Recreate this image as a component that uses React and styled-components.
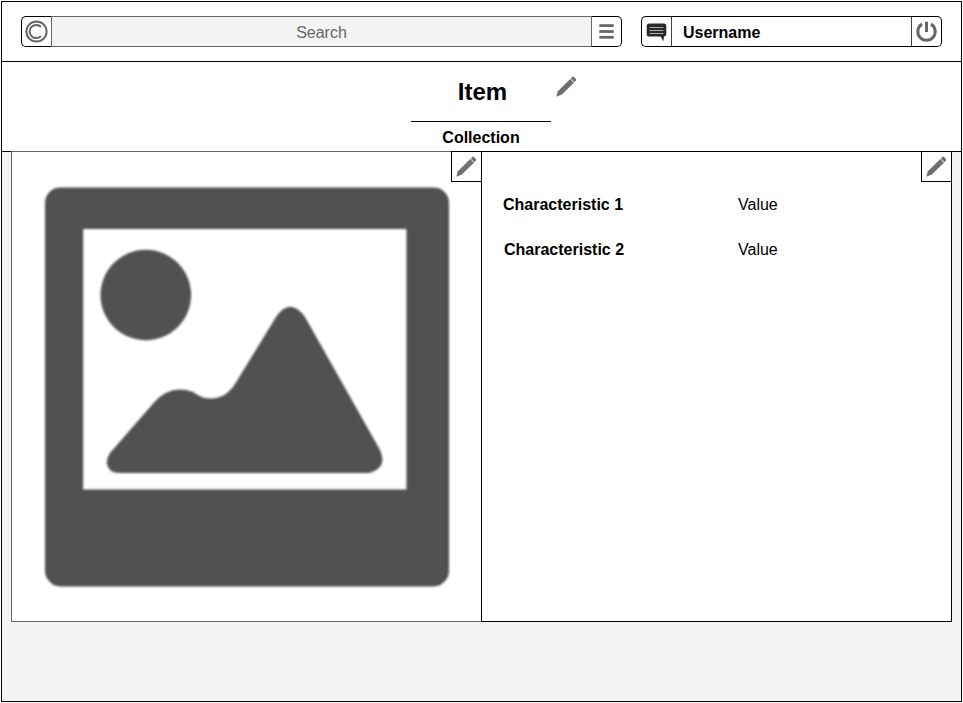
import React from "react";
import styled, { createGlobalStyle } from "styled-components";

const GlobalStyle = createGlobalStyle`
  * { box-sizing: border-box; }
  body {
    margin: 0;
    background: #fff;
    color: #000;
    font-family: "Liberation Sans", Arial, Helvetica, sans-serif;
    font-size: 16px;
    overflow: hidden;
  }
  svg { display: block; }
`;

const Frame = styled.div`
  width: 961px;
  height: 701px;
  margin: 1px;
  border: 1px solid #000;
  background: #f4f4f4;
  display: flex;
  flex-direction: column;
`;

const Header = styled.header`
  display: flex;
  gap: 19px;
  height: 60px;
  padding: 14px 19px 0;
  background: #fff;
  border-bottom: 1px solid #000;
`;

const Bar = styled.div`
  display: flex;
  width: ${(p) => p.$width}px;
  height: 31px;
`;

const IconButton = styled.button`
  width: 30px;
  height: 31px;
  padding: 0;
  background: #fff;
  border: 1px solid #000;
  border-width: ${(p) => (p.$side === "left" ? "1px 0 1px 1px" : "1px 1px 1px 0")};
  border-radius: ${(p) => (p.$side === "left" ? "5px 0 0 5px" : "0 5px 5px 0")};
  display: flex;
  align-items: center;
  justify-content: ${(p) => (p.$side === "left" ? "flex-start" : "flex-end")};
`;

const SearchField = styled.div`
  flex: 1;
  border: 1px solid #666;
  background: #f4f4f4;
  color: #666;
  text-align: center;
  line-height: 31px;
`;

const UserField = styled.div`
  flex: 1;
  border: 1px solid #000;
  border-left-color: #444;
  border-right-color: #444;
  padding-left: 11px;
  font-weight: bold;
  line-height: 31px;
`;

const TitleSection = styled.section`
  display: grid;
  grid-template-columns: 409px 140px 1fr;
  grid-template-rows: 59px 1fr;
  height: 90px;
  background: #fff;
  border-bottom: 1px solid #000;
`;

const Title = styled.h1`
  grid-column: 2;
  margin: 0;
  font-size: 24px;
  line-height: 59px;
  text-align: center;
  padding-left: 3px;
`;

const TitleEdit = styled.div`
  grid-column: 3;
  padding: 10px 0 0 1px;
`;

const Collection = styled.h2`
  grid-column: 2;
  grid-row: 2;
  margin: 0;
  border-top: 1px solid #000;
  font-size: 16px;
  line-height: 31px;
  text-align: center;
`;

const Content = styled.main`
  display: flex;
  width: 941px;
  height: 471px;
  margin: -1px 0 0 9px;
`;

const Panel = styled.section`
  position: relative;
  background: #fff;
`;

const PicturePanel = styled(Panel)`
  width: 470px;
  border: 1px solid #666;
  border-right: 0;
  padding: 29px 0 0 27px;
`;

const DetailsPanel = styled(Panel)`
  width: 471px;
  border: 1px solid #000;
  padding: 30px 0 0 21px;
`;

const EditButton = styled.button`
  position: absolute;
  top: -1px;
  right: -1px;
  width: 31px;
  height: 31px;
  padding: 0;
  border: 1px solid #000;
  background: #fff;
`;

const Characteristics = styled.dl`
  margin: 0;
  display: grid;
  grid-template-columns: 235px 1fr;
  grid-auto-rows: 45px;
  line-height: 45px;
`;

const Name = styled.dt`
  font-weight: bold;
  padding-left: ${(p) => p.$indent || 0}px;
`;

const Value = styled.dd`
  margin: 0;
`;

function Pencil() {
  return (
    <svg width="29" height="29" viewBox="0 0 29 29" fill="#707070">
      <path d="M4.3 24.7 5.8 19.2 18.2 6.9 22 10.7 9.9 22.6Z" />
      <path d="M18.7 6.4 20.3 4.9Q21.2 4.2 22 4.9L23.9 6.9Q24.6 7.7 23.9 8.5L22.5 10.2Z" />
    </svg>
  );
}

function CopyrightIcon() {
  return (
    <svg width="29" height="29" viewBox="0 0 29 29" fill="none" stroke="#666">
      <circle cx="14.5" cy="14.5" r="10.1" strokeWidth="2" />
      <path d="M19 9.9A6.6 6.6 0 1 0 19 19.1" strokeWidth="2" />
    </svg>
  );
}

function MenuIcon() {
  return (
    <svg width="29" height="29" viewBox="0 0 29 29" fill="#666">
      <rect x="7.3" y="7.2" width="14.4" height="2.8" />
      <rect x="7.3" y="13.1" width="14.4" height="2.8" />
      <rect x="7.3" y="18.9" width="14.4" height="2.8" />
    </svg>
  );
}

function MessageIcon() {
  return (
    <svg width="29" height="29" viewBox="0 0 29 29">
      <path
        d="M7.2 6.5H21.8Q24.3 6.5 24.3 9V17Q24.3 19.6 22 19.6L21.4 24.2 18.6 19.6H7.2Q4.7 19.6 4.7 17V9Q4.7 6.5 7.2 6.5Z"
        fill="#292929"
      />
      <path d="M7.5 10.5H21.5M7.5 13.5H21.5M7.5 16.5H21.5" stroke="#aaa" strokeWidth="1.2" />
    </svg>
  );
}

function PowerIcon() {
  return (
    <svg width="29" height="29" viewBox="0 0 29 29" fill="none" stroke="#666" strokeWidth="3">
      <path d="M10 7.1A8.7 8.7 0 1 0 19 7.1" />
      <path d="M14.5 4.7V15" />
    </svg>
  );
}

function PicturePlaceholder() {
  return (
    <svg width="416" height="416" viewBox="39 181 416 416" fill="#515151">
      <defs>
        <filter id="soft" x="-5%" y="-5%" width="110%" height="110%">
          <feGaussianBlur stdDeviation="1.1" />
        </filter>
      </defs>
      <g filter="url(#soft)">
        <path
          fillRule="evenodd"
          d="M60 187.6H434Q440 187.6 444.5 192Q449 196.500 449 203V571Q449 577 444.5 581.5Q440 586.4 434 586.4H60Q54 586.4 49.5 581.5Q45 577 45 571V203Q45 196.500 49.5 192Q54 187.6 60 187.6ZM83.2 229V489.5H406.4V229Z"
        />
        <circle cx="145.8" cy="295" r="45.3" />
        <path d="M120 473Q108 473 106.7 463Q106.7 458 110 453L154 402.5Q170 384.500 192 391.5C198 395 202 398.5 210 398.5C222 398.5 229 393 235 384L276 317Q290 296.5 305 317L380 450Q388 468 369 473Z" />
      </g>
    </svg>
  );
}

const characteristics = [
  { name: "Characteristic 1", value: "Value", indent: 0 },
  { name: "Characteristic 2", value: "Value", indent: 1 },
];

export default function App() {
  return (
    <>
      <GlobalStyle />
      <Frame>
        <Header>
          <Bar $width={601}>
            <IconButton $side="left" aria-label="Home"><CopyrightIcon /></IconButton>
            <SearchField>Search</SearchField>
            <IconButton $side="right" aria-label="Menu"><MenuIcon /></IconButton>
          </Bar>
          <Bar $width={301}>
            <IconButton $side="left" aria-label="Messages"><MessageIcon /></IconButton>
            <UserField>Username</UserField>
            <IconButton $side="right" aria-label="Log out"><PowerIcon /></IconButton>
          </Bar>
        </Header>
        <TitleSection>
          <Title>Item</Title>
          <TitleEdit><Pencil /></TitleEdit>
          <Collection>Collection</Collection>
        </TitleSection>
        <Content>
          <PicturePanel>
            <PicturePlaceholder />
            <EditButton aria-label="Edit picture"><Pencil /></EditButton>
          </PicturePanel>
          <DetailsPanel>
            <Characteristics>
              {characteristics.map((c) => (
                <React.Fragment key={c.name}>
                  <Name $indent={c.indent}>{c.name}</Name>
                  <Value>{c.value}</Value>
                </React.Fragment>
              ))}
            </Characteristics>
            <EditButton aria-label="Edit characteristics"><Pencil /></EditButton>
          </DetailsPanel>
        </Content>
      </Frame>
    </>
  );
}
